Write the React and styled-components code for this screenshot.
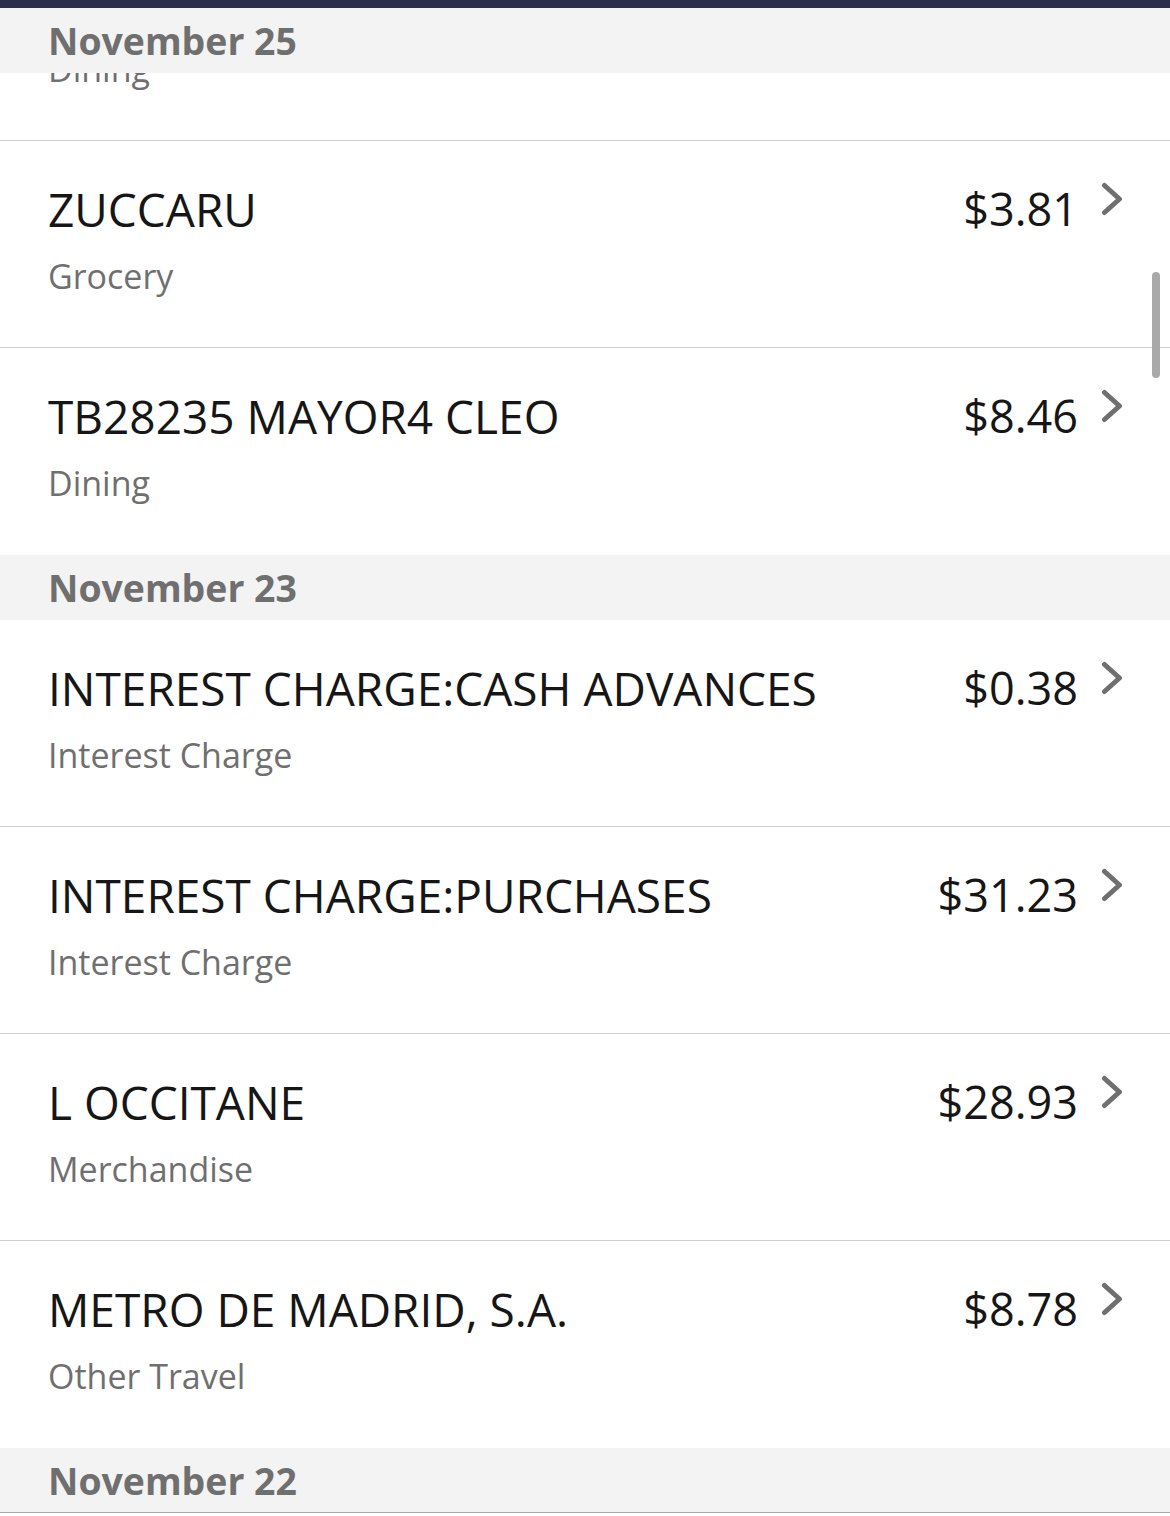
import React, { useLayoutEffect, useRef } from "react";
import styled, { createGlobalStyle } from "styled-components";

const GlobalStyle = createGlobalStyle`
  html, body {
    margin: 0;
    padding: 0;
    background: #ffffff;
    font-family: "Open Sans", "Noto Sans", sans-serif;
  }
`;

const Screen = styled.div`
  display: flex;
  flex-direction: column;
  width: 1170px;
  height: 1516px;
  overflow: hidden;
`;

const TopBar = styled.div`
  height: 8px;
  flex-shrink: 0;
  background-color: #2a2f4b;
`;

const Viewport = styled.div`
  position: relative;
  flex: 1;
  min-height: 0;
`;

const Scroller = styled.div`
  height: 100%;
  overflow-y: auto;
  scrollbar-width: none;
  &::-webkit-scrollbar {
    display: none;
  }
`;

const ScrollThumb = styled.div`
  position: absolute;
  top: 264px;
  right: 10px;
  width: 8px;
  height: 106px;
  border-radius: 4px;
  background-color: #a9a9a9;
`;

const Section = styled.section`
  display: flex;
  flex-direction: column;
`;

const DateHeader = styled.h2`
  position: sticky;
  top: 0;
  z-index: 1;
  box-sizing: border-box;
  height: 65px;
  margin: 0;
  padding: 0 48px;
  display: flex;
  align-items: center;
  background-color: #f3f3f3;
  color: #6f6f6f;
  font-size: 37.4px;
  font-weight: 700;
  border-bottom: 1px solid ${(props) => (props.edge ? "#a8a8a8" : "transparent")};
`;

const Row = styled.div`
  box-sizing: border-box;
  height: 207px;
  display: flex;
  align-items: flex-start;
  padding-left: 48px;
  border-bottom: 1px solid #cfcfcf;
  background-color: #ffffff;
  &:last-child {
    border-bottom-color: transparent;
  }
`;

const Info = styled.div`
  flex: 1;
  min-width: 0;
  display: flex;
  flex-direction: column;
  padding-top: 37px;
`;

const Merchant = styled.div`
  color: #161616;
  font-size: 46px;
  line-height: 62px;
  white-space: nowrap;
`;

const Category = styled.div`
  margin-top: 10px;
  color: #6f6f6f;
  font-size: 34px;
  line-height: 52px;
`;

const Amount = styled.div`
  padding-top: 37px;
  color: #161616;
  font-size: 45px;
  line-height: 62px;
  white-space: nowrap;
`;

const Chevron = styled.svg`
  flex-shrink: 0;
  width: 22px;
  height: 34px;
  margin: 41px 47px 0 23px;
`;

const ChevronIcon = () => (
  <Chevron viewBox="0 0 22 34">
    <polyline
      points="3.5,3.5 18.5,17 3.5,30.5"
      fill="none"
      stroke="#6f6f6f"
      strokeWidth="5"
      strokeLinecap="round"
      strokeLinejoin="round"
    />
  </Chevron>
);

const sections = [
  {
    date: "November 25",
    items: [
      { name: "CAFE CENTRAL", category: "Dining", amount: "$12.40" },
      { name: "ZUCCARU", category: "Grocery", amount: "$3.81" },
      { name: "TB28235 MAYOR4 CLEO", category: "Dining", amount: "$8.46" },
    ],
  },
  {
    date: "November 23",
    items: [
      { name: "INTEREST CHARGE:CASH ADVANCES", category: "Interest Charge", amount: "$0.38" },
      { name: "INTEREST CHARGE:PURCHASES", category: "Interest Charge", amount: "$31.23" },
      { name: "L OCCITANE", category: "Merchandise", amount: "$28.93" },
      { name: "METRO DE MADRID, S.A.", category: "Other Travel", amount: "$8.78" },
    ],
  },
  {
    date: "November 22",
    edge: true,
    items: [{ name: "EL CORTE INGLES", category: "Merchandise", amount: "$16.20" }],
  },
];

const TransactionRow = ({ name, category, amount }) => (
  <Row>
    <Info>
      <Merchant>{name}</Merchant>
      <Category>{category}</Category>
    </Info>
    <Amount>{amount}</Amount>
    <ChevronIcon />
  </Row>
);

const App = () => {
  const scrollRef = useRef(null);

  useLayoutEffect(() => {
    if (scrollRef.current) scrollRef.current.scrollTop = 139;
  }, []);

  return (
    <>
      <GlobalStyle />
      <Screen>
        <TopBar />
        <Viewport>
          <Scroller ref={scrollRef}>
            {sections.map((section) => (
              <Section key={section.date}>
                <DateHeader edge={section.edge}>{section.date}</DateHeader>
                {section.items.map((item) => (
                  <TransactionRow key={item.name} {...item} />
                ))}
              </Section>
            ))}
          </Scroller>
          <ScrollThumb />
        </Viewport>
      </Screen>
    </>
  );
};

export default App;
